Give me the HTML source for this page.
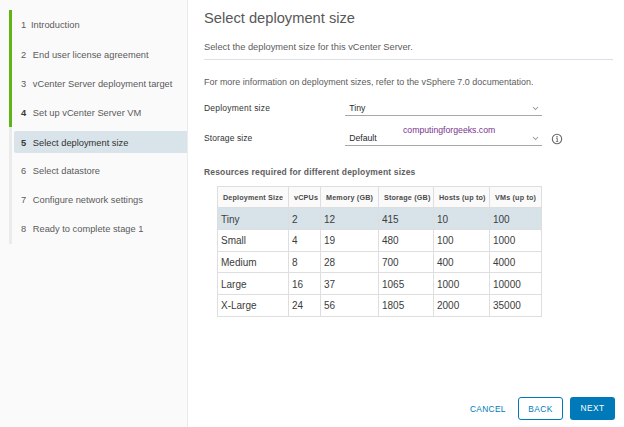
<!DOCTYPE html>
<html><head><meta charset="utf-8">
<style>
*{margin:0;padding:0;box-sizing:border-box}
html,body{width:624px;height:427px;overflow:hidden;background:#fff;font-family:"Liberation Sans",sans-serif}
.side{position:absolute;left:0;top:0;width:188px;height:427px;background:#fafafa;border-right:1px solid #ebebeb}
.gbar{position:absolute;left:9px;top:10px;width:3px;height:117px;background:#60b515}
.gline{position:absolute;left:9.3px;top:127px;width:2.5px;height:117px;background:#ebebeb}
.hl{position:absolute;left:14px;top:131px;width:173px;height:22px;background:#d9e4ea;border-radius:2px 0 0 2px}
.it{position:absolute;left:21px;font-size:9.3px;color:#5a5a5a;white-space:nowrap}
.it .n{display:inline-block;width:11.8px}
.act{color:#313131}
.b{font-weight:bold;color:#3a3a3a}
.main{position:absolute;left:188px;top:0;right:0;bottom:0}
.t{position:absolute;white-space:nowrap}
h1{position:absolute;left:204px;top:9.5px;font-size:14.7px;font-weight:normal;color:#585858;white-space:nowrap}
.hr{position:absolute;left:204px;top:59px;width:409px;height:1px;background:#dae1e6}
.sel{position:absolute;left:345px;width:197px;height:1px;background:#a8a8a8}
.chev{position:absolute;left:532px}
table{position:absolute;left:217px;top:186px;border-collapse:collapse;font-size:10px;color:#3c3c3c}
td,th{border:1px solid #dedede;height:21.65px;padding:1.2px 0 0 3px;text-align:left;vertical-align:middle}
th{font-size:7.2px;font-weight:bold;color:#4a4a4a;background:#fafafa;height:21.4px;padding-left:5px;letter-spacing:0.18px}
tr.sel1 td{background:#d8e3e9}
.btn{position:absolute;top:397.3px;height:22.4px;width:45px;font-size:8.4px;letter-spacing:0.4px;text-align:center;line-height:22.6px;border-radius:3px}
</style></head><body>
<div class="side">
  <div class="gbar"></div>
  <div class="gline"></div>
  <div class="hl"></div>
  <div class="it" style="top:20.1px"><span class="n" style="width:10px">1</span>Introduction</div>
  <div class="it" style="top:49.5px"><span class="n">2</span>End user license agreement</div>
  <div class="it" style="top:78.6px"><span class="n">3</span>vCenter Server deployment target</div>
  <div class="it" style="top:107.7px"><span class="n b">4</span>Set up vCenter Server VM</div>
  <div class="it act" style="top:137.5px"><span class="n b">5</span>Select deployment size</div>
  <div class="it" style="top:166px"><span class="n">6</span>Select datastore</div>
  <div class="it" style="top:195px"><span class="n">7</span>Configure network settings</div>
  <div class="it" style="top:224px"><span class="n">8</span>Ready to complete stage 1</div>
</div>
<h1>Select deployment size</h1>
<div class="t" style="left:204px;top:42px;font-size:9.3px;color:#5c5c5c">Select the deployment size for this vCenter Server.</div>
<div class="hr"></div>
<div class="t" style="left:204px;top:77px;font-size:8.95px;color:#5c5c5c">For more information on deployment sizes, refer to the vSphere 7.0 documentation.</div>
<div class="t" style="left:204px;top:103px;font-size:8.5px;letter-spacing:0.22px;color:#333">Deployment size</div>
<div class="t" style="left:204px;top:133px;font-size:8.5px;letter-spacing:0.1px;color:#333">Storage size</div>
<div class="t" style="left:349.3px;top:102.8px;font-size:8.7px;color:#2b2b2b">Tiny</div>
<div class="t" style="left:349.2px;top:132.8px;font-size:8.7px;color:#2b2b2b">Default</div>
<div class="sel" style="top:115px"></div>
<div class="sel" style="top:145px"></div>
<svg class="chev" style="top:106px" width="7" height="5" viewBox="0 0 7 5"><path d="M1 1 L3.5 3.6 L6 1" fill="none" stroke="#9a9a9a" stroke-width="1.05"/></svg>
<svg class="chev" style="top:136px" width="7" height="5" viewBox="0 0 7 5"><path d="M1 1 L3.5 3.6 L6 1" fill="none" stroke="#9a9a9a" stroke-width="1.05"/></svg>
<div class="t" style="left:403px;top:125.3px;font-size:8.7px;color:#7a3490">computingforgeeks.com</div>
<svg style="position:absolute;left:551px;top:133px" width="12" height="12" viewBox="0 0 12 12"><circle cx="6" cy="6" r="4.7" fill="none" stroke="#666" stroke-width="1.05"/><circle cx="6" cy="3.7" r="0.75" fill="#666"/><path d="M5.1 5.3 H6.3 V8.4" fill="none" stroke="#666" stroke-width="0.9"/><path d="M4.9 8.5 H7.2" fill="none" stroke="#666" stroke-width="0.8"/></svg>
<div class="t" style="left:204px;top:167px;font-size:8.5px;font-weight:bold;letter-spacing:0.17px;color:#5e5e5e">Resources required for different deployment sizes</div>
<table>
<colgroup><col style="width:71px"><col style="width:32px"><col style="width:58px"><col style="width:55px"><col style="width:56px"><col style="width:52px"></colgroup>
<tr><th>Deployment Size</th><th>vCPUs</th><th>Memory (GB)</th><th>Storage (GB)</th><th>Hosts (up to)</th><th>VMs (up to)</th></tr>
<tr class="sel1"><td>Tiny</td><td>2</td><td>12</td><td>415</td><td>10</td><td>100</td></tr>
<tr><td>Small</td><td>4</td><td>19</td><td>480</td><td>100</td><td>1000</td></tr>
<tr><td>Medium</td><td>8</td><td>28</td><td>700</td><td>400</td><td>4000</td></tr>
<tr><td>Large</td><td>16</td><td>37</td><td>1065</td><td>1000</td><td>10000</td></tr>
<tr><td>X-Large</td><td>24</td><td>56</td><td>1805</td><td>2000</td><td>35000</td></tr>
</table>
<div class="t" style="left:470px;top:403.8px;font-size:8.4px;letter-spacing:0.3px;color:#0079b8">CANCEL</div>
<div class="btn" style="left:518px;border:1px solid #0079b8;color:#0079b8">BACK</div>
<div class="btn" style="left:570px;background:#0079b8;color:#fff">NEXT</div>
</body></html>
